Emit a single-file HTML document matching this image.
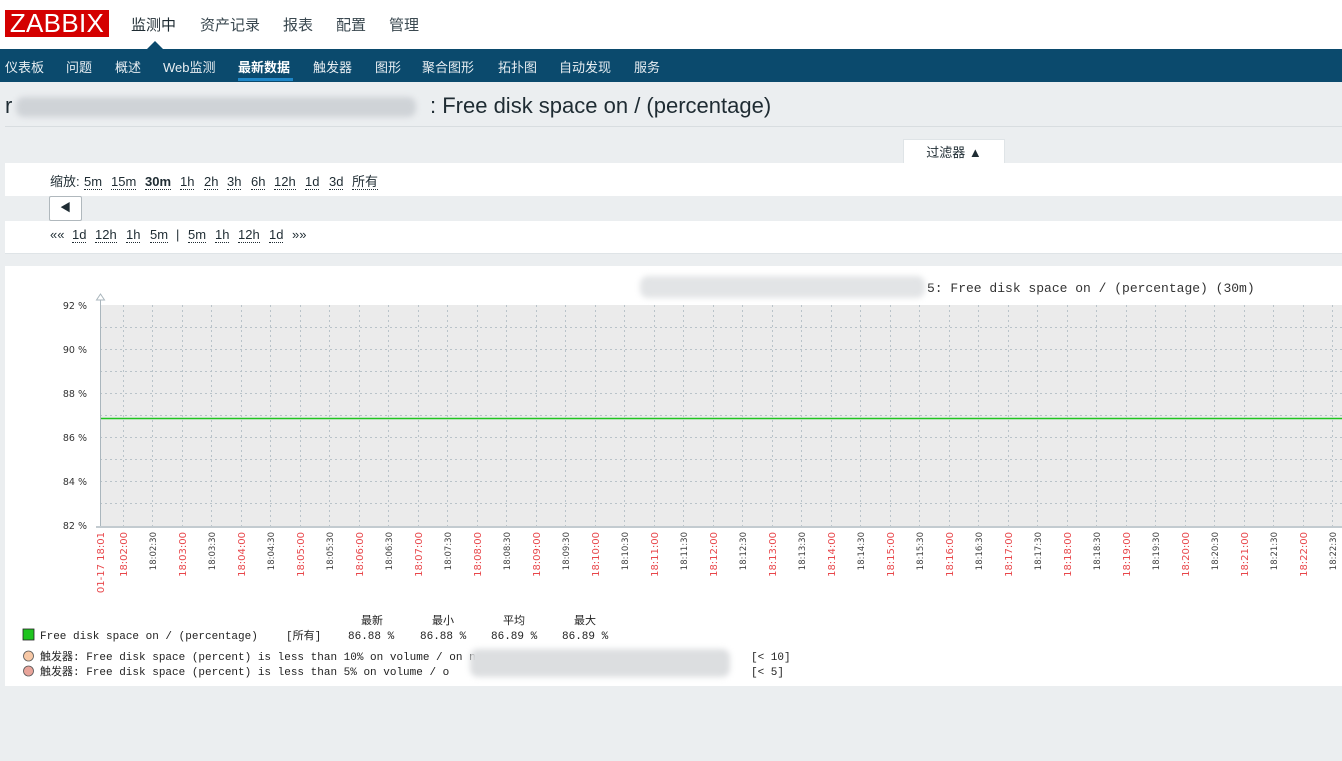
<!DOCTYPE html>
<html><head><meta charset="utf-8">
<style>
*{margin:0;padding:0;box-sizing:border-box}
body{width:1342px;height:761px;background:#ebeef0;font-family:"Liberation Sans","Noto Sans CJK SC",sans-serif;position:relative;overflow:hidden;color:#1f2c33}
.abs{position:absolute}
.top{left:0;top:0;width:1342px;height:49px;background:#fff}
.logo{left:5px;top:10px;width:104px;height:27px;background:#d40000;color:#fff;font-size:26px;line-height:27px;text-align:center;letter-spacing:0.3px}
.mm{top:14px;font-size:15px;color:#1f2c33}
.nav{left:0;top:49px;width:1342px;height:33px;background:#0b4a6d}
.nav span{position:absolute;top:8px;font-size:13px;color:#e8eef2}
.tri{left:147px;top:41px;width:0;height:0;border-left:8px solid transparent;border-right:8px solid transparent;border-bottom:8px solid #0b4a6d}
.title{left:5px;top:93px;font-size:22px;color:#1f2c33}
.blur{background:#cfd3d7;filter:blur(3px);border-radius:8px}
.z{position:absolute;font-size:13px;color:#1f2c33;border-bottom:1px dotted #1f2c33;line-height:15px}
.t{position:absolute;font-size:13px;color:#1f2c33;line-height:15px}
</style></head><body>
<div class="abs top"></div>
<div class="abs logo">ZABBIX</div>
<div class="abs mm" style="left:131px">监测中</div>
<div class="abs mm" style="left:200px;color:#3a4850">资产记录</div>
<div class="abs mm" style="left:283px;color:#3a4850">报表</div>
<div class="abs mm" style="left:336px;color:#3a4850">配置</div>
<div class="abs mm" style="left:389px;color:#3a4850">管理</div>
<div class="abs tri"></div>
<div class="abs nav">
<span style="left:5px">仪表板</span><span style="left:66px">问题</span><span style="left:115px">概述</span><span style="left:163px">Web监测</span><span style="left:238px;color:#fff;font-weight:bold">最新数据</span><span style="left:313px">触发器</span><span style="left:375px">图形</span><span style="left:422px">聚合图形</span><span style="left:498px">拓扑图</span><span style="left:559px">自动发现</span><span style="left:634px">服务</span>
<div class="abs" style="left:238px;top:29px;width:55px;height:3px;background:#1e87c8"></div>
</div>
<div class="abs title">r</div>
<div class="abs blur" style="left:16px;top:97px;width:400px;height:20px"></div>
<div class="abs title" style="left:430px">: Free disk space on / (percentage)</div>
<div class="abs" style="left:5px;top:126px;width:1337px;height:1px;background:#d8dde0"></div>
<!-- filter -->
<div class="abs" style="left:903px;top:139px;width:102px;height:25px;background:#fff;border:1px solid #dfe4e7;border-bottom:none;font-size:13px;text-align:center;line-height:25px">过滤器 ▲</div>
<div class="abs" style="left:5px;top:163px;width:1337px;height:91px;background:#fff;border-bottom:1px solid #dfe4e7"></div>
<span class="t" style="left:50px;top:174px">缩放:</span>
<span class="z" style="left:84px;top:174px">5m</span><span class="z" style="left:111px;top:174px">15m</span><span class="z" style="left:145px;top:174px;font-weight:bold">30m</span><span class="z" style="left:180px;top:174px">1h</span><span class="z" style="left:204px;top:174px">2h</span><span class="z" style="left:227px;top:174px">3h</span><span class="z" style="left:251px;top:174px">6h</span><span class="z" style="left:274px;top:174px">12h</span><span class="z" style="left:305px;top:174px">1d</span><span class="z" style="left:329px;top:174px">3d</span><span class="z" style="left:352px;top:174px">所有</span>
<div class="abs" style="left:5px;top:196px;width:1337px;height:25px;background:#ebeef0"></div>
<div class="abs" style="left:49px;top:196px;width:33px;height:25px;background:#fff;border:1px solid #b0b8bd;border-radius:2px;font-size:11px;text-align:center;line-height:23px">◀</div>
<span class="t" style="left:50px;top:227px">««</span>
<span class="z" style="left:72px;top:227px">1d</span><span class="z" style="left:95px;top:227px">12h</span><span class="z" style="left:126px;top:227px">1h</span><span class="z" style="left:150px;top:227px">5m</span><span class="t" style="left:176px;top:227px">|</span><span class="z" style="left:188px;top:227px">5m</span><span class="z" style="left:215px;top:227px">1h</span><span class="z" style="left:238px;top:227px">12h</span><span class="z" style="left:269px;top:227px">1d</span><span class="t" style="left:292px;top:227px">»»</span>
<!-- graph panel -->
<div class="abs" style="left:5px;top:266px;width:1337px;height:420px;background:#fff"></div>
<svg class="abs" style="left:0;top:0" width="1342" height="761" xmlns="http://www.w3.org/2000/svg">
<rect x="100" y="305" width="1242" height="222" fill="#ebebeb"/>
<g stroke="#b9c3c9" stroke-width="1" stroke-dasharray="2,3">
<line x1="100" y1="327.5" x2="1342" y2="327.5"/><line x1="100" y1="349.5" x2="1342" y2="349.5"/><line x1="100" y1="371.5" x2="1342" y2="371.5"/><line x1="100" y1="393.5" x2="1342" y2="393.5"/><line x1="100" y1="415.5" x2="1342" y2="415.5"/><line x1="100" y1="437.5" x2="1342" y2="437.5"/><line x1="100" y1="459.5" x2="1342" y2="459.5"/><line x1="100" y1="481.5" x2="1342" y2="481.5"/><line x1="100" y1="503.5" x2="1342" y2="503.5"/>
<line x1="123.5" y1="305" x2="123.5" y2="527"/><line x1="152.5" y1="305" x2="152.5" y2="527"/><line x1="182.5" y1="305" x2="182.5" y2="527"/><line x1="211.5" y1="305" x2="211.5" y2="527"/><line x1="241.5" y1="305" x2="241.5" y2="527"/><line x1="270.5" y1="305" x2="270.5" y2="527"/><line x1="300.5" y1="305" x2="300.5" y2="527"/><line x1="329.5" y1="305" x2="329.5" y2="527"/><line x1="359.5" y1="305" x2="359.5" y2="527"/><line x1="388.5" y1="305" x2="388.5" y2="527"/><line x1="418.5" y1="305" x2="418.5" y2="527"/><line x1="447.5" y1="305" x2="447.5" y2="527"/><line x1="477.5" y1="305" x2="477.5" y2="527"/><line x1="506.5" y1="305" x2="506.5" y2="527"/><line x1="536.5" y1="305" x2="536.5" y2="527"/><line x1="565.5" y1="305" x2="565.5" y2="527"/><line x1="595.5" y1="305" x2="595.5" y2="527"/><line x1="624.5" y1="305" x2="624.5" y2="527"/><line x1="654.5" y1="305" x2="654.5" y2="527"/><line x1="683.5" y1="305" x2="683.5" y2="527"/><line x1="713.5" y1="305" x2="713.5" y2="527"/><line x1="742.5" y1="305" x2="742.5" y2="527"/><line x1="772.5" y1="305" x2="772.5" y2="527"/><line x1="801.5" y1="305" x2="801.5" y2="527"/><line x1="831.5" y1="305" x2="831.5" y2="527"/><line x1="860.5" y1="305" x2="860.5" y2="527"/><line x1="890.5" y1="305" x2="890.5" y2="527"/><line x1="919.5" y1="305" x2="919.5" y2="527"/><line x1="949.5" y1="305" x2="949.5" y2="527"/><line x1="978.5" y1="305" x2="978.5" y2="527"/><line x1="1008.5" y1="305" x2="1008.5" y2="527"/><line x1="1037.5" y1="305" x2="1037.5" y2="527"/><line x1="1067.5" y1="305" x2="1067.5" y2="527"/><line x1="1096.5" y1="305" x2="1096.5" y2="527"/><line x1="1126.5" y1="305" x2="1126.5" y2="527"/><line x1="1155.5" y1="305" x2="1155.5" y2="527"/><line x1="1185.5" y1="305" x2="1185.5" y2="527"/><line x1="1214.5" y1="305" x2="1214.5" y2="527"/><line x1="1244.5" y1="305" x2="1244.5" y2="527"/><line x1="1273.5" y1="305" x2="1273.5" y2="527"/><line x1="1303.5" y1="305" x2="1303.5" y2="527"/><line x1="1332.5" y1="305" x2="1332.5" y2="527"/>
</g>
<line x1="100" y1="418.5" x2="1342" y2="418.5" stroke="#1fc41f" stroke-width="1.5"/>
<line x1="100.5" y1="296" x2="100.5" y2="528" stroke="#aab6bd" stroke-width="1"/>
<line x1="96" y1="527" x2="1342" y2="527" stroke="#c3cbd0" stroke-width="2"/>
<path d="M96.5 300 L100.5 294 L104.5 300 Z" fill="#fff" stroke="#aab6bd"/>
<g font-family="DejaVu Sans,Liberation Sans,sans-serif" font-size="9.5" fill="#333" text-anchor="end">
<text x="87" y="309">92 %</text><text x="87" y="353">90 %</text><text x="87" y="397">88 %</text><text x="87" y="441">86 %</text><text x="87" y="485">84 %</text><text x="87" y="529">82 %</text>
</g>
<g font-family="DejaVu Sans,Liberation Sans,sans-serif" text-anchor="end">
<g font-size="10" fill="#e8474b">
<text transform="translate(104,532) rotate(-90)">01-17 18:01</text>
<text transform="translate(127,532) rotate(-90)">18:02:00</text><text transform="translate(186,532) rotate(-90)">18:03:00</text><text transform="translate(245,532) rotate(-90)">18:04:00</text><text transform="translate(304,532) rotate(-90)">18:05:00</text><text transform="translate(363,532) rotate(-90)">18:06:00</text><text transform="translate(422,532) rotate(-90)">18:07:00</text><text transform="translate(481,532) rotate(-90)">18:08:00</text><text transform="translate(540,532) rotate(-90)">18:09:00</text><text transform="translate(599,532) rotate(-90)">18:10:00</text><text transform="translate(658,532) rotate(-90)">18:11:00</text><text transform="translate(717,532) rotate(-90)">18:12:00</text><text transform="translate(776,532) rotate(-90)">18:13:00</text><text transform="translate(835,532) rotate(-90)">18:14:00</text><text transform="translate(894,532) rotate(-90)">18:15:00</text><text transform="translate(953,532) rotate(-90)">18:16:00</text><text transform="translate(1012,532) rotate(-90)">18:17:00</text><text transform="translate(1071,532) rotate(-90)">18:18:00</text><text transform="translate(1130,532) rotate(-90)">18:19:00</text><text transform="translate(1189,532) rotate(-90)">18:20:00</text><text transform="translate(1248,532) rotate(-90)">18:21:00</text><text transform="translate(1307,532) rotate(-90)">18:22:00</text>
</g>
<g font-size="8.5" fill="#444">
<text transform="translate(156,532) rotate(-90)">18:02:30</text><text transform="translate(215,532) rotate(-90)">18:03:30</text><text transform="translate(274,532) rotate(-90)">18:04:30</text><text transform="translate(333,532) rotate(-90)">18:05:30</text><text transform="translate(392,532) rotate(-90)">18:06:30</text><text transform="translate(451,532) rotate(-90)">18:07:30</text><text transform="translate(510,532) rotate(-90)">18:08:30</text><text transform="translate(569,532) rotate(-90)">18:09:30</text><text transform="translate(628,532) rotate(-90)">18:10:30</text><text transform="translate(687,532) rotate(-90)">18:11:30</text><text transform="translate(746,532) rotate(-90)">18:12:30</text><text transform="translate(805,532) rotate(-90)">18:13:30</text><text transform="translate(864,532) rotate(-90)">18:14:30</text><text transform="translate(923,532) rotate(-90)">18:15:30</text><text transform="translate(982,532) rotate(-90)">18:16:30</text><text transform="translate(1041,532) rotate(-90)">18:17:30</text><text transform="translate(1100,532) rotate(-90)">18:18:30</text><text transform="translate(1159,532) rotate(-90)">18:19:30</text><text transform="translate(1218,532) rotate(-90)">18:20:30</text><text transform="translate(1277,532) rotate(-90)">18:21:30</text><text transform="translate(1336,532) rotate(-90)">18:22:30</text>
</g>
</g>
<text x="927" y="292" font-family="Liberation Mono,monospace" font-size="13" fill="#333">5: Free disk space on / (percentage) (30m)</text>
<g font-family="Liberation Mono,Noto Sans CJK SC,monospace" font-size="11" fill="#222">
<text x="361" y="624">最新</text><text x="432" y="624">最小</text><text x="503" y="624">平均</text><text x="574" y="624">最大</text>
<text x="40" y="639">Free disk space on / (percentage)</text>
<text x="286" y="639">[所有]</text>
<text x="348" y="639">86.88 %</text><text x="420" y="639">86.88 %</text><text x="491" y="639">86.89 %</text><text x="562" y="639">86.89 %</text>
<text x="40" y="660">触发器: Free disk space (percent) is less than 10% on volume / on n</text>
<text x="40" y="675">触发器: Free disk space (percent) is less than 5% on volume / o</text>
<text x="751" y="660">[&lt; 10]</text><text x="751" y="675">[&lt; 5]</text>
</g>
<rect x="23" y="629" width="11" height="11" fill="#1fc41f" stroke="#222" stroke-width="0.8"/>
<circle cx="28.5" cy="656" r="5" fill="#f7c8a6" stroke="#555" stroke-width="0.8"/>
<circle cx="28.5" cy="671" r="5" fill="#e8a49a" stroke="#555" stroke-width="0.8"/>
</svg>
<div class="abs blur" style="left:640px;top:276px;width:285px;height:22px;background:#e2e4e6"></div>
<div class="abs blur" style="left:470px;top:649px;width:260px;height:28px;background:#dcdee0"></div>
</body></html>
